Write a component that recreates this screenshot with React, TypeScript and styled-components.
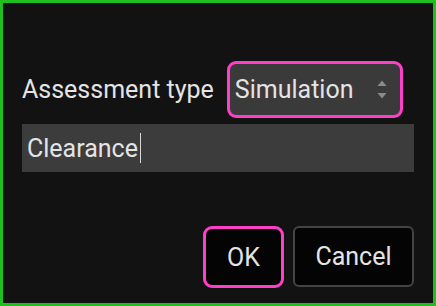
import React from "react";
import styled, { createGlobalStyle } from "styled-components";

const GlobalStyle = createGlobalStyle`
  html, body {
    margin: 0;
    padding: 0;
    background: #121212;
  }
  * { box-sizing: border-box; }
`;

const Dialog = styled.div`
  width: 436px;
  height: 306px;
  border: 3px solid #1fbf1f;
  background: #121212;
  display: flex;
  flex-direction: column;
  padding: 58px 19px 15px 19px;
  font-family: Roboto, "Liberation Sans", sans-serif;
  color: #e4e4e4;
`;

const Row = styled.div`
  display: flex;
  align-items: center;
  gap: 13px;
`;

const Label = styled.span`
  font-size: 25px;
  line-height: 1;
`;

const Select = styled.div`
  width: 176px;
  height: 57px;
  border: 3.5px solid #ff3fc9;
  border-radius: 9px;
  background: #3a3a3a;
  display: flex;
  align-items: center;
  justify-content: space-between;
  padding: 0 13px 0 5px;
  font-size: 25px;
`;

const Arrows = styled.svg`
  width: 10px;
  height: 19px;
  display: block;
`;

const TextField = styled.div`
  margin-top: 6px;
  height: 48px;
  background: #3c3c3c;
  display: flex;
  align-items: center;
  padding-left: 5px;
  font-size: 25px;
`;

const Caret = styled.span`
  display: inline-block;
  width: 1.5px;
  height: 30px;
  background: #d8d8d8;
  margin-left: 2px;
`;

const Buttons = styled.div`
  margin-top: auto;
  display: flex;
  justify-content: flex-end;
  gap: 9px;
`;

const Button = styled.button<{ $primary?: boolean }>`
  font-family: Roboto, "Liberation Sans", sans-serif;
  font-size: 25px;
  color: #e4e4e4;
  background: #040404;
  height: ${(p) => (p.$primary ? "62px" : "61px")};
  width: ${(p) => (p.$primary ? "81px" : "121px")};
  border: ${(p) => (p.$primary ? "3.5px solid #ff3fc9" : "2px solid #444444")};
  border-radius: ${(p) => (p.$primary ? "9px" : "6px")};
  padding: 0;
  display: flex;
  align-items: center;
  justify-content: center;
`;

export default function App() {
  return (
    <>
      <GlobalStyle />
      <Dialog>
        <Row>
          <Label>Assessment type</Label>
          <Select>
            <span>Simulation</span>
            <Arrows viewBox="0 0 10 19">
              <path d="M0.5 6 L5 0.5 L9.5 6 Z" fill="#8a8a8a" />
              <path d="M0.5 13 L5 18.5 L9.5 13 Z" fill="#8a8a8a" />
            </Arrows>
          </Select>
        </Row>
        <TextField>
          Clearance
          <Caret />
        </TextField>
        <Buttons>
          <Button $primary>OK</Button>
          <Button>Cancel</Button>
        </Buttons>
      </Dialog>
    </>
  );
}
